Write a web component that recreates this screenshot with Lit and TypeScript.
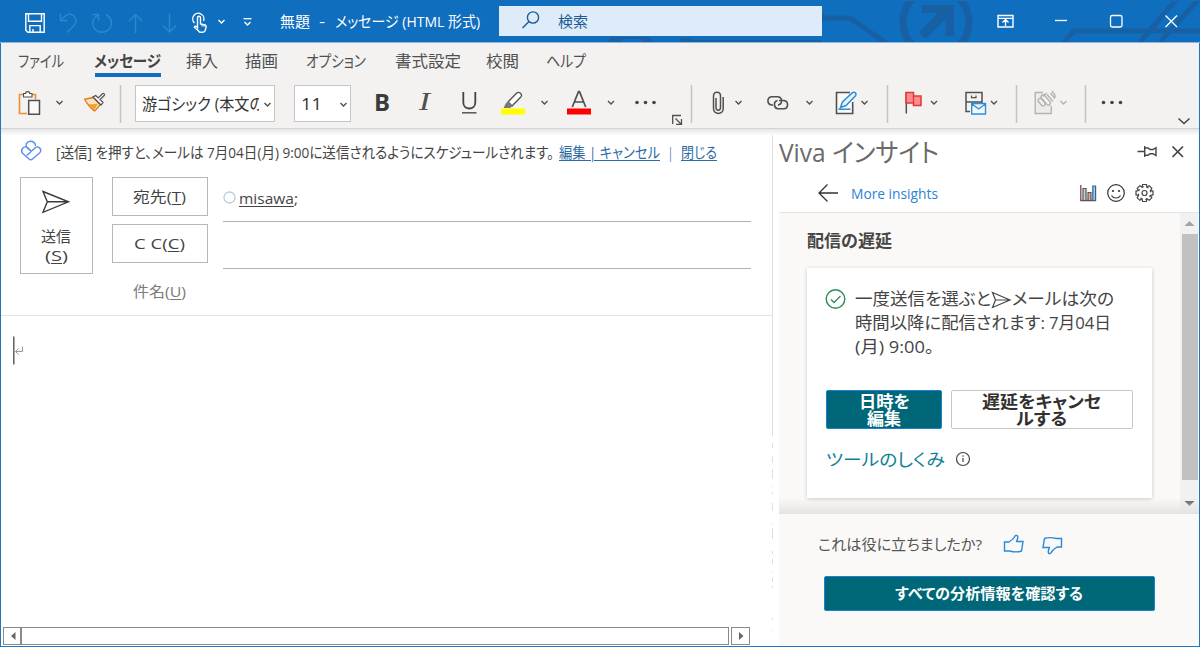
import { LitElement, html, css, svg } from "lit";
import { customElement, property, query } from "lit/decorators.js";

/** A single line of text condensed or widened to an exact width. */
@customElement("fit-text")
class FitText extends LitElement {
  @property({ type: Number }) w = 0;
  @query("span") inner!: HTMLSpanElement;
  static styles = css`
    :host { display: inline-block; white-space: nowrap; text-align: left; flex: none; }
    span { display: inline-block; transform-origin: 0 50%; white-space: pre; }
  `;
  render() {
    return html`<span><slot></slot></span>`;
  }
  firstUpdated() {
    const natural = this.inner.getBoundingClientRect().width;
    this.style.width = `${this.w}px`;
    if (natural > 0) this.inner.style.transform = `scaleX(${this.w / natural})`;
  }
}

/** An icon whose drawing uses the window's coordinate space. */
const icon = (x: number, y: number, w: number, h: number, body: unknown) =>
  html`<svg width=${w} height=${h} viewBox="${x} ${y} ${w} ${h}" fill="none">${body}</svg>`;

const chev = (x: number, y = 102, c = "#444", r = 3) =>
  svg`<path d="M${x - r} ${y - r / 2}l${r} ${r} ${r} ${-r}" stroke=${c} stroke-width="1.4"/>`;

@customElement("title-bar")
class TitleBar extends LitElement {
  static styles = css`
    :host { display: block; position: relative; height: 42px; background: #106ebe; color: #fff; border-bottom: 1px solid #8ab6e0; box-sizing: content-box; }
    svg { display: block; overflow: visible; }
    .art { position: absolute; inset: 0; overflow: hidden; }
    .art svg { overflow: hidden; }
    .row { position: relative; height: 42px; display: grid; align-items: center;
      grid-template-columns: 20px 36px 34px 34px 34px 29px 25px 28px 40px 39px 16px 164px 498px 54px 55px 55px 39px; }
    .title { font-size: 15px; line-height: 22px; }
    .search { display: flex; align-items: center; width: 323px; height: 30px; background: #deecf9; color: #1d5a94; }
    .search svg { margin-left: 22px; }
    .search fit-text { margin-left: 17px; font-size: 15px; line-height: 22px; }
  `;
  render() {
    const dim = "#2f86d0";
    return html`
      <div class="art">${icon(0, 0, 1200, 42, svg`
        <g stroke="#1860a4" stroke-width="5">
          <circle cx="936" cy="22" r="33" stroke-width="7"/>
          <path d="M822 18h28l36 25"/><circle cx="822" cy="18" r="4" fill="#1860a4" stroke="none"/>
          <path d="M1062 44l12-13h126"/>
          <path d="M1140 42l36-42M1160 42l38-42" />
        </g>
        <path d="M918 0h36v42h-36z" fill="#106ebe"/>
        <path d="M922 5h32v31h-8.500V19l-20 20-6.500-6.500 19-19.500h-16z" fill="#1860a4"/>
        <path d="M608 42c1-3 3-5 5-5h35c3 1 4 3 5 5h-9l-5-3h-14l-5 3z M680 42l1-4h11l1 2h129v2z" fill="#1860a4"/>
        <path d="M0 0h1200v1H0z" fill="#106ebe"/>`)}</div>
      <div class="row">
        <span></span>
        ${icon(20, 0, 30, 42, svg`<g stroke="#fff" stroke-width="1.4"><path d="M25.800 13.700h18.400v18.600H27.800l-2-2z"/><path d="M28.500 14v7.300h13V14M29.800 32v-6.400h10.400V32M33 32v-3"/></g>`)}
        ${icon(56, 0, 30, 42, svg`<path d="M60.500 13.500v7h7M61 20c4-5 8-7 11.500-5 4.500 2.500 4.500 7.500 1.500 10.500l-7 7" stroke=${dim} stroke-width="1.4"/>`)}
        ${icon(90, 0, 30, 42, svg`<path d="M92.500 14.500h6v6M98 15c-5 3-7 8-4 13 4 5.500 12 5.500 16 0 3-5 1-11-4-13.500" stroke=${dim} stroke-width="1.4"/>`)}
        ${icon(124, 0, 30, 42, svg`<path d="M135.500 33V14.500M129 21l6.500-6.500 6.500 6.500" stroke=${dim} stroke-width="1.4"/>`)}
        ${icon(158, 0, 30, 42, svg`<path d="M169.500 13.500V32M163 25.500l6.500 6.500 6.500-6.500" stroke=${dim} stroke-width="1.4"/>`)}
        ${icon(187, 0, 24, 42, svg`<g stroke="#fff" stroke-width="1.400"><path d="M194.500 23a5.600 5.600 0 1 1 9-2"/><path d="M197.500 27.500V17.800c0-2 3-2 3 0V24l4 .7c1.400.4 1.800 1.200 1.600 2.500l-.8 3c-.5 1.500-1.300 2-2.500 2h-3c-1.800-1.500-3.500-3.500-5.500-5 .5-1.500 2-1.200 3.200.3z"/><path d="M202 24v2.500M204 25v2" stroke-width="1"/></g>`)}
        ${icon(212, 0, 20, 42, chev(221.500, 21.500, "#fff"))}
        ${icon(240, 0, 20, 42, svg`<path d="M243.500 18.700h8" stroke="#fff" stroke-width="1.300"/>${chev(247.500, 23.500, "#fff")}`)}
        <fit-text class="title" w="30">無題</fit-text>
        <fit-text class="title" w="6">-</fit-text>
        <fit-text class="title" w="145">メッセージ (HTML 形式)</fit-text>
        <div class="search">
          ${icon(521, 7, 20, 30, svg`<circle cx="533" cy="18.500" r="5.600" stroke="#1d5a94" stroke-width="1.400"/><path d="M529 22.500l-6.500 6.500" stroke="#1d5a94" stroke-width="1.500"/>`)}
          <fit-text w="30">検索</fit-text>
        </div>
        ${icon(997, 0, 20, 42, svg`<path d="M998 15.500h15v11.500h-15z" stroke="#fff" stroke-width="1.400"/><path d="M998 18.300h15M1005.500 26v-6M1002.500 22.500l3-3 3 3" stroke="#fff" stroke-width="1.300"/>`)}
        ${icon(1051, 0, 20, 42, svg`<path d="M1055 20.500h12" stroke="#fff" stroke-width="1.300"/>`)}
        ${icon(1106, 0, 20, 42, svg`<rect x="1110.500" y="15.500" width="11.500" height="11.500" rx="1.800" stroke="#fff" stroke-width="1.300"/>`)}
        ${icon(1161, 0, 20, 42, svg`<path d="M1165.500 15.500l11.500 11.500M1177 15.500l-11.500 11.500" stroke="#fff" stroke-width="1.300"/>`)}
      </div>`;
  }
}

@customElement("ribbon-bar")
class RibbonBar extends LitElement {
  static styles = css`
    :host { display: block; height: 85px; background: #f3f2f1; border-bottom: 1px solid #d4d3d2; color: #505050; }
    svg { display: block; overflow: visible; }
    .tabs { display: grid; height: 36px; align-items: center; font-size: 16px; line-height: 24px;
      grid-template-columns: 17px 76px 92px 59px 61px 89px 91px 60px 60px; }
    .on { position: relative; font-weight: 700; color: #444; }
    .on::after { content: ""; position: absolute; left: 1px; bottom: -4px; width: 66px; height: 4px; background: #106ebe; }
    .tools { display: grid; height: 49px; align-items: center;
      grid-template-columns: 15px 33px 31px 36px 19px 159px 80px 45px 37px 37px 36px 29px 37px 30px 38px 18px 20px 20px 34px 36px 35px 20px 29px 30px 30px 32px 30px 25px 24px 24px 24px 74px; }
    .field { display: flex; align-items: center; justify-content: space-between; height: 35px; border: 1px solid #c8c6c4; background: #fff; color: #333; padding-left: 6px; font-size: 16px; box-sizing: content-box; }
    .font { width: 132px; }
    .clip { width: 117px; overflow: hidden; display: flex; margin-top: -2px; }
    .size { width: 49px; }
    .glyph { height: 36px; line-height: 32px; font-size: 24px; color: #3b3b3b; }
    .b { font-weight: 700; }
    .i { font-family: "Liberation Serif", serif; font-style: italic; font-size: 26px; color: #505050; }
  `;
  render() {
    const k = "#505050";
    const g = "#b5b3b2";
    const sep = (x: number) => icon(x - 4, 79, 10, 49, svg`<path d="M${x + 0.5} 85v38" stroke="#c4c3c2" stroke-width="1.500"/>`);
    return html`
      <div class="tabs">
        <span></span>
        <fit-text w="46">ファイル</fit-text>
        <fit-text class="on" w="67">メッセージ</fit-text>
        <fit-text w="32">挿入</fit-text>
        <fit-text w="33">描画</fit-text>
        <fit-text w="60">オプション</fit-text>
        <fit-text w="66">書式設定</fit-text>
        <fit-text w="33">校閲</fit-text>
        <fit-text w="40">ヘルプ</fit-text>
      </div>
      <div class="tools">
        <span></span>
        ${icon(16, 79, 28, 49, svg`<path d="M27 113.500h-7.500V94.500h4M31.500 94.500h4v5" stroke="#e8912d" stroke-width="1.600"/><path d="M23.500 97v-3.500h2.200c0-2.500 4-2.500 4 0H32V97z" fill="#fff" stroke=${k} stroke-width="1.100"/><path d="M28.700 100.500h10.800v13.800H28.700z" fill="#fafafa" stroke=${k} stroke-width="1.500"/>`)}
        ${icon(49, 79, 12, 49, chev(59.500, 102.500, k))}
        ${icon(80, 79, 28, 49, svg`<path d="M93.500 97.500l-8.800 1.800c2.500 5 6 9 9.800 11.800l5.700-6.300z" fill="#fbe2bd" stroke="#d97b1f" stroke-width="1.300"/><path d="M87.500 103.500c4 1.200 7 1 10.500 0l-4 7z" fill="#f0a030"/><path d="M93 97l8 8 2-2.500-3-3 4.200-4c1-1.200-.5-2.600-1.700-1.700l-4.300 4.200-2.500-2.500z" fill="#fff" stroke=${k} stroke-width="1.200"/>`)}
        ${sep(120)}
        <div class="field font"><div class="clip"><fit-text w="122">游ゴシック (本文の</fit-text></div>${icon(262, 79, 12, 33, chev(267.500, 96.500, k))}</div>
        <div class="field size"><fit-text w="21">11</fit-text>${icon(338, 79, 12, 33, chev(343.500, 96.500, k))}</div>
        <fit-text class="glyph b" w="16">B</fit-text>
        <fit-text class="glyph i" w="11">I</fit-text>
        ${icon(456, 79, 24, 49, svg`<path d="M463.300 92v10.500c0 8 12 8 12 0V92" stroke="#444" stroke-width="1.800"/><path d="M462 112.800h14.500" stroke="#555" stroke-width="1.500"/>`)}
        ${icon(493, 79, 30, 49, svg`<path d="M501 108.500h24v6h-24z" fill="#ff0"/><path d="M508 102l8.500-8.700c2.500-2.500 6.500 1 4.300 3.700L512 106z" fill="#fff" stroke=${k} stroke-width="1.300"/><path d="M503.500 108l2.500-5 2.500-1.500 4.500 4.500-3 2z" fill="#777"/>`)}
        ${icon(529, 79, 20, 49, chev(544.500, 102.500, k))}
        ${icon(558, 79, 30, 49, svg`<path d="M567 108.500h24v6h-24z" fill="#f00"/><path d="M572.300 107l6.200-15.300h1l6.200 15.300M574.500 102h9" stroke=${k} stroke-width="1.700"/>`)}
        ${icon(595, 79, 20, 49, chev(611, 102.500, k))}
        ${icon(625, 79, 32, 49, svg`<g fill="#444"><circle cx="637" cy="102.500" r="1.800"/><circle cx="645.500" cy="102.500" r="1.800"/><circle cx="654" cy="102.500" r="1.800"/></g>`)}
        ${icon(663, 79, 18, 49, svg`<path d="M681 115.500h-8.300v8.500M675.500 118.500l5.500 5.500M681.500 119v5.300h-5.500" stroke=${k} stroke-width="1.300"/>`)}
        ${icon(681, 79, 12, 49, svg`<path d="M691.500 85v38" stroke="#c4c3c2" stroke-width="1.500"/>`)}
        ${icon(701, 79, 20, 49, svg`<path d="M713.500 98v-2c0-5 7-5 7 0v11.500c0 3.500-4.500 3.500-4.500 0V98M713.500 97v11.500c0 6.500 9.700 6.500 9.700 0V97" stroke=${k} stroke-width="1.500"/>`)}
        ${icon(721, 79, 20, 49, chev(738.500, 102.500, k))}
        ${icon(755, 79, 30, 49, svg`<path d="M773 105h-1.500a4.200 4.200 0 0 1 0-8.300h6.500a4.200 4.200 0 0 1 0 8.300" stroke=${k} stroke-width="1.600"/><path d="M779 100.500h5a4.200 4.200 0 0 1 0 8.300h-6a4.200 4.200 0 0 1-.5-8.200" stroke=${k} stroke-width="1.600"/>`)}
        ${icon(791, 79, 20, 49, chev(809.500, 102.500, k))}
        ${icon(826, 79, 20, 49, svg`<path d="M850 92.500h-13.500v21h16.200V102" fill="#fafafa" stroke=${k} stroke-width="1.600"/><path d="M840.500 107.500l2-5.500L852.500 92.700c2-1.500 4.700 1 3 3L846 105.500zM838.500 109.300h12" fill="#e8f4fc" stroke="#2b8fd6" stroke-width="1.500"/>`)}
        ${icon(846, 79, 20, 49, chev(864.500, 102.500, k))}
        ${icon(875, 79, 20, 49, svg`<path d="M887.500 85v38" stroke="#c4c3c2" stroke-width="1.500"/><path d="M906.300 92v21.500" stroke=${k} stroke-width="1.500"/><path d="M906 92.500h7.500v3.500h7.500v9.500h-7.500v-2.500H906z" fill="#ff8a8f" stroke="#dc3a32" stroke-width="1.500"/><path d="M913.500 96v7" stroke="#dc3a32" stroke-width="1.300"/>`)}
        ${icon(905, 79, 20, 49, chev(934, 102.500, k))}
        ${icon(935, 79, 20, 49, svg`<path d="M970 111.500h-4V92.500h16v9.500H966M982 102v1" stroke=${k} stroke-width="1.500"/><path d="M971.500 95.500v2.200h4.500v-2.200" stroke=${k} stroke-width="1.200"/><path d="M971.700 103.500h13.800v10.500h-13.800zM972 104l6.700 5 6.700-5" fill="#f4fbff" stroke="#2b8fd6" stroke-width="1.400"/>`)}
        ${icon(967, 79, 20, 49, chev(994, 102.500, k))}
        ${icon(997, 79, 20, 49, svg`<path d="M1016.500 85v38" stroke="#c4c3c2" stroke-width="1.500"/><path d="M1043 92.500h-7.800v21h16V106" fill="#ececec" stroke=${g} stroke-width="1.400"/><g stroke=${g} stroke-width="1.400" fill="#f3f2f1"><rect x="1039.500" y="98" width="4" height="8.500" rx="2" transform="rotate(-40 1041.500 102)"/><rect x="1043.800" y="94" width="4" height="12" rx="2" transform="rotate(-40 1045.800 100)"/><path fill="none" d="M1047 94.500l6 7M1050.500 93l4 5c1.500-2 0-4-1.500-5.500l-1-1.500M1043.500 96.500l3-3.500"/></g>`)}
        ${icon(1022, 79, 20, 49, chev(1063.500, 102.500, g))}
        ${icon(1046, 79, 20, 49, svg`<path d="M1085.500 85v38" stroke="#c4c3c2" stroke-width="1.500"/>`)}
        ${icon(1070, 79, 20, 49, svg`<g fill="#444"><circle cx="1103.500" cy="102.500" r="1.800"/><circle cx="1112" cy="102.500" r="1.800"/><circle cx="1120.500" cy="102.500" r="1.800"/></g>`)}
        ${icon(1094, 79, 20, 49, svg`<path d="M1178.500 118.500l5.500 5 5.500-5" stroke="#444" stroke-width="1.500"/>`)}
      </div>`;
  }
}

@customElement("mail-compose")
class MailCompose extends LitElement {
  static styles = css`
    :host { display: flex; flex-direction: column; width: 771px; color: #444; font-size: 15px; }
    svg { display: block; overflow: visible; flex: none; }
    .notice { display: flex; align-items: center; height: 34px; margin-bottom: 1px; padding: 0 0 0 19px; line-height: 22px; }
    .text { margin-left: 14px; }
    .links { display: flex; margin-left: 5px; gap: 8px; color: #2f6ca5; text-underline-offset: 3px; margin-top: -1px; }
    .form { display: grid; grid-template-columns: 73px 96px 528px; column-gap: 19px; height: 146px; padding: 7px 0 0 19px; box-sizing: border-box; border-bottom: 1px solid #e1e1e1; }
    .send, .btn { border: 1px solid #b9b7b5; box-sizing: border-box; }
    .send { height: 97px; display: flex; flex-direction: column; align-items: center; line-height: 19px; padding: 11px 1px 0 0; }
    .send svg { margin-bottom: 12px; }
    .mid { display: flex; flex-direction: column; gap: 8px; }
    .btn { height: 39px; display: flex; align-items: center; justify-content: center; line-height: 22px; padding: 0 1px 1px 0; }
    .btn.bare { border-color: transparent; color: #7a7a7a; padding-bottom: 0; }
    .lines { margin-left: -4px; width: 528px; }
    .line { height: 44px; border-bottom: 1px solid #b0b0b0; display: flex; align-items: center; gap: 2px; }
    .line fit-text { margin-top: -3px; }
    .line svg { margin-top: -1px; }
    .line + .line { height: 46px; }
    u { text-underline-offset: 2px; }
    .body { flex: 1; padding: 20px 0 0 11px; }
    .scroll { display: flex; height: 17px; margin: 0 0 2px 2px; }
    .cell { border: 1px solid #8a8a8a; width: 17px; height: 16px; display: grid; place-items: center; }
    .track { width: 706px; margin-right: 2px; border-left-width: 2px; margin-left: -2px; }
  `;
  render() {
    return html`
      <div class="notice">
        ${icon(20, 141, 22, 24, svg`<g stroke="#5b8def" stroke-width="1.400" stroke-linejoin="round"><path d="M26 147.500c-.5-7 9.500-7 9.500-.5"/><path d="M22.500 149.500c1.500-2 3.500-2 5.500-.5l3.500 3.500M22.500 149.500c-1.200 1.500-1.200 3.500.3 5l6.200 5.500c1 1 2.500 1 3.500 0l7-6c1.600-1.600 1.500-3.500.3-5-1.300-1.500-3.200-1.500-4.600-.2l-8.500 7.700"/><path d="M26 147.500l5 4.800"/></g>`)}
        <fit-text class="text" w="498">[送信] を押すと、メールは 7月04日(月) 9:00に送信されるようにスケジュールされます。</fit-text>
        <div class="links"><fit-text w="101"><u>編集 | キャンセル</u></fit-text><fit-text w="5">|</fit-text><fit-text w="36"><u>閉じる</u></fit-text></div>
      </div>
      <div class="form">
        <div class="send">
          ${icon(42, 189, 28, 26, svg`<path d="M43 191.500l25.500 10.300L43 212.300l4.300-10.500zM47 201.800h20" stroke="#3b3b3b" stroke-width="1.400"/>`)}
          <fit-text w="30">送信</fit-text><fit-text w="23">(<u>S</u>)</fit-text>
        </div>
        <div class="mid">
          <div class="btn"><fit-text w="53">宛先(<u>T</u>)</fit-text></div>
          <div class="btn"><fit-text w="51">C C(<u>C</u>)</fit-text></div>
          <div class="btn bare"><fit-text w="53">件名(<u>U</u>)</fit-text></div>
        </div>
        <div class="lines">
          <div class="line">${icon(223, 191, 14, 16, svg`<circle cx="229.500" cy="197.500" r="5.500" stroke="#b5cfdc" stroke-width="1.300"/>`)}<fit-text w="59"><u>misawa</u>;</fit-text></div>
          <div class="line"></div>
        </div>
      </div>
      <div class="body">${icon(12, 336, 14, 30, svg`<path d="M13.800 336.500v28" stroke="#555" stroke-width="1.400"/><path d="M22.500 346.500v5h-7M18.500 348.500l-3 3 3 3" stroke="#999" stroke-width="1"/>`)}</div>
      <div class="scroll">
        <div class="cell">${icon(0, 0, 8, 10, svg`<path d="M6.500 1v8L2 5z" fill="#666"/>`)}</div>
        <div class="cell track"></div>
        <div class="cell">${icon(0, 0, 8, 10, svg`<path d="M2 1v8l4.500-4z" fill="#666"/>`)}</div>
      </div>`;
  }
}

@customElement("viva-pane")
class VivaPane extends LitElement {
  static styles = css`
    :host { display: flex; flex-direction: column; width: 420px; color: #555; }
    svg { display: block; overflow: visible; flex: none; }
    .head { height: 32px; padding-bottom: 7px; display: grid; grid-template-columns: 357px 33px 30px; align-items: center; font-size: 26px; line-height: 34px; color: #6a6a6a; }
    .nav { height: 38px; border-bottom: 1px solid #e6e6e6; display: grid; grid-template-columns: 37px 35px 227px 28px 29px 30px; align-items: center; font-size: 15px; line-height: 22px; color: #2b84d2; }
    .scroller { height: 301px; display: flex; background: #faf9f8; position: relative; }
    .fade { position: absolute; left: 0; right: 0; bottom: 0; height: 16px; background: linear-gradient(#e4e3e200, #e4e3e2); }
    .content { width: 401px; padding: 16px 0 0 28px; box-sizing: border-box; }
    .h { font-size: 17px; line-height: 24px; font-weight: 700; color: #484644; }
    .card { width: 345px; height: 230px; margin-top: 15px; box-sizing: border-box; background: #fff; box-shadow: 0 1px 4px #0003; padding: 19px 19px 0 19px; }
    .msg { display: flex; gap: 8px; color: #444; font-size: 17px; line-height: 24px; }
    .msg > svg { margin-left: -1px; margin-right: 1px; }
    .ln { display: flex; height: 24px; }
    .btns { display: flex; gap: 9px; margin-top: 31px; }
    .act { box-sizing: border-box; height: 39px; border-radius: 2px; display: flex; flex-direction: column; align-items: center; justify-content: center; font-size: 17px; font-weight: 700; line-height: 17px; }
    .teal { background: #006778; color: #fff; border: 1px solid #1c7fd0; }
    .edit { width: 116px; }
    .cancel { width: 182px; border: 1px solid #c8c6c4; color: #323130; background: #fff; padding-right: 2px; }
    .how { display: flex; align-items: center; gap: 11px; margin-top: 19px; font-size: 17px; line-height: 24px; color: #108094; }
    .bar { width: 18px; background: #f1f1f1; display: flex; flex-direction: column; align-items: center; justify-content: space-between; padding: 6px 0; box-sizing: border-box; }
    .thumb { width: 16px; height: 246px; background: #c1c1c1; margin: -4px 0 9px 2px; }
    .foot { flex: 1; background: #faf9f8; padding: 18px 0 0 45px; }
    .ask { display: flex; height: 24px; align-items: center; font-size: 15px; line-height: 22px; margin-left: -6px; }
    .ask svg { margin-left: 20px; }
    .all { width: 331px; height: 35px; margin-top: 20px; font-size: 15px; padding-right: 2px; }
  `;
  render() {
    const k = "#444";
    const teeth = Array.from({ length: 8 }, (_, i) => i * 45);
    return html`
      <div class="head">
        <fit-text w="160">Viva インサイト</fit-text>
        ${icon(1136, 139, 24, 24, svg`<path d="M1137.500 150.500h7M1144.700 145v11M1145 147h3l2 1.500h3l3-1.800v7.800l-3-1.800h-3l-2 1.500h-3" stroke=${k} stroke-width="1.400"/>`)}
        ${icon(1169, 139, 20, 24, svg`<path d="M1172.500 145.500l10.500 10.500M1183 145.500l-10.500 10.500" stroke=${k} stroke-width="1.700"/>`)}
      </div>
      <div class="nav">
        <span></span>
        ${icon(816, 183, 24, 20, svg`<path d="M838 193h-19M827.500 184.500L819 193l8.500 8.500" stroke="#333" stroke-width="1.300"/>`)}
        <fit-text w="87">More insights</fit-text>
        ${icon(1078, 183, 20, 20, svg`<path d="M1080.800 185v15.500h15" stroke="#8a3f5e" stroke-width="1.300"/><path d="M1083 188.500h3v12h-3z" fill="#c2d7ca" stroke="#555" stroke-width="1.200"/><path d="M1088 192.500h3v8h-3z" fill="#e0a99b" stroke="#555" stroke-width="1.200"/><path d="M1092.800 186h2.800v14.500h-2.800z" fill="#9cc9e8" stroke="#37648f" stroke-width="1.200"/>`)}
        ${icon(1106, 183, 20, 20, svg`<circle cx="1116" cy="193" r="8.300" stroke="#333" stroke-width="1.200"/><circle cx="1113" cy="191" r="1.100" fill="#333"/><circle cx="1119" cy="191" r="1.100" fill="#333"/><path d="M1111.500 195.500c2 3.300 7 3.300 9 0" stroke="#333" stroke-width="1.200"/>`)}
        ${icon(1135, 183, 20, 20, svg`<g stroke="#444" stroke-width="1.200"><circle cx="1144.500" cy="193" r="2.500"/>${teeth.map((a) => svg`<path transform="rotate(${a} 1144.500 193)" d="M1142 187.300l.6-2.800h3.800l.6 2.800 1.500.6"/>`)}</g>`)}
      </div>
      <div class="scroller">
        <div class="content">
          <fit-text class="h" w="85">配信の遅延</fit-text>
          <div class="card">
            <div class="msg">
              ${icon(825, 287, 21, 24, svg`<circle cx="835.500" cy="299" r="9.300" stroke="#2f8a57" stroke-width="1.400"/><path d="M831 299.500l3 3 6.500-6.500" stroke="#2f8a57" stroke-width="1.300"/>`)}
              <div>
                <div class="ln"><fit-text w="136">一度送信を選ぶと</fit-text>${icon(991, 287, 21, 24, svg`<path d="M992.500 292.500l17.500 7.500-17.500 7.500 3-7.500zM995.500 300h14" stroke="#444" stroke-width="1.200"/>`)}<fit-text w="102">メールは次の</fit-text></div>
                <div class="ln"><fit-text w="190">時間以降に配信されます:</fit-text><fit-text w="62" style="margin-left:4px">7月04日</fit-text></div>
                <div class="ln"><fit-text w="79">(月) 9:00。</fit-text></div>
              </div>
            </div>
            <div class="btns">
              <div class="act teal edit"><fit-text w="51">日時を</fit-text><fit-text w="34">編集</fit-text></div>
              <div class="act cancel"><fit-text w="119">遅延をキャンセ</fit-text><fit-text w="51">ルする</fit-text></div>
            </div>
            <div class="how"><fit-text w="119">ツールのしくみ</fit-text>${icon(956, 450, 16, 18, svg`<circle cx="963" cy="458" r="6.500" stroke="#444" stroke-width="1.200"/><path d="M963 457v4M963 454.300v1.400" stroke="#444" stroke-width="1.200"/>`)}</div>
          </div>
        </div>
        <div class="bar">
          ${icon(0, 0, 10, 8, svg`<path d="M.5 7L5.500 2l5 5z" fill="#a3a3a3"/>`)}
          <div class="thumb"></div>
          ${icon(0, 0, 10, 8, svg`<path d="M.5 1l5 5 5-5z" fill="#505050"/>`)}
        </div>
        <div class="fade"></div>
      </div>
      <div class="foot">
        <div class="ask">
          <fit-text w="164">これは役に立ちましたか?</fit-text>
          ${icon(1002, 533, 22, 22, svg`<path d="M1004.500 542h4.500c2.500-1.500 5-3.500 6.500-6.500 2-.5 2.500 1 2.200 2.500l-1 3.500h6.300l-1.500 9.500c-4 1.500-8 1-12 0h-5z" stroke="#2b88d8" stroke-width="1.400"/>`)}
          ${icon(1044, 533, 22, 22, svg`<path d="M1061.500 547h-4.500c-2.500 1.500-5 3.500-6.500 6.500-2 .5-2.500-1-2.200-2.500l1-3.500h-6.300l1.500-9c4-1.500 8-1 12 0h5z" stroke="#2b88d8" stroke-width="1.400"/>`)}
        </div>
        <div class="act teal all"><fit-text w="188">すべての分析情報を確認する</fit-text></div>
      </div>`;
  }
}

@customElement("app-root")
class AppRoot extends LitElement {
  static styles = css`
    :host { display: block; height: 647px; width: 1200px; overflow: hidden; box-sizing: border-box; position: relative; background: #fff;
      font-family: "Open Sans", "Noto Sans CJK JP", sans-serif; font-feature-settings: "palt"; }
    .win { border: 1px solid #1f77c4; border-top: 0; height: 603px; display: flex; flex-direction: column; }
    .shade { height: 6px; background: linear-gradient(#e6e6e6, #fdfdfd); }
    .main { display: flex; flex: 1; }
    .split { width: 7px; }
    svg { display: block; }
  `;
  render() {
    const dashes = [[134, 302], [443, 5], [456, 7], [469, 10], [486, 1], [492, 2], [503, 8], [523, 1], [528, 11], [551, 3], [559, 5], [572, 1], [577, 5], [586, 2], [618, 2], [630, 1]];
    return html`
      <title-bar></title-bar>
      <div class="win">
        <ribbon-bar></ribbon-bar>
        <div class="shade"></div>
        <div class="main">
          <mail-compose></mail-compose>
          <div class="split">${icon(772, 135, 7, 511, dashes.map(([y, h]) => svg`<path d="M772.500 ${y}v${h}" stroke="#dedede"/>`))}</div>
          <viva-pane></viva-pane>
        </div>
      </div>`;
  }
}
